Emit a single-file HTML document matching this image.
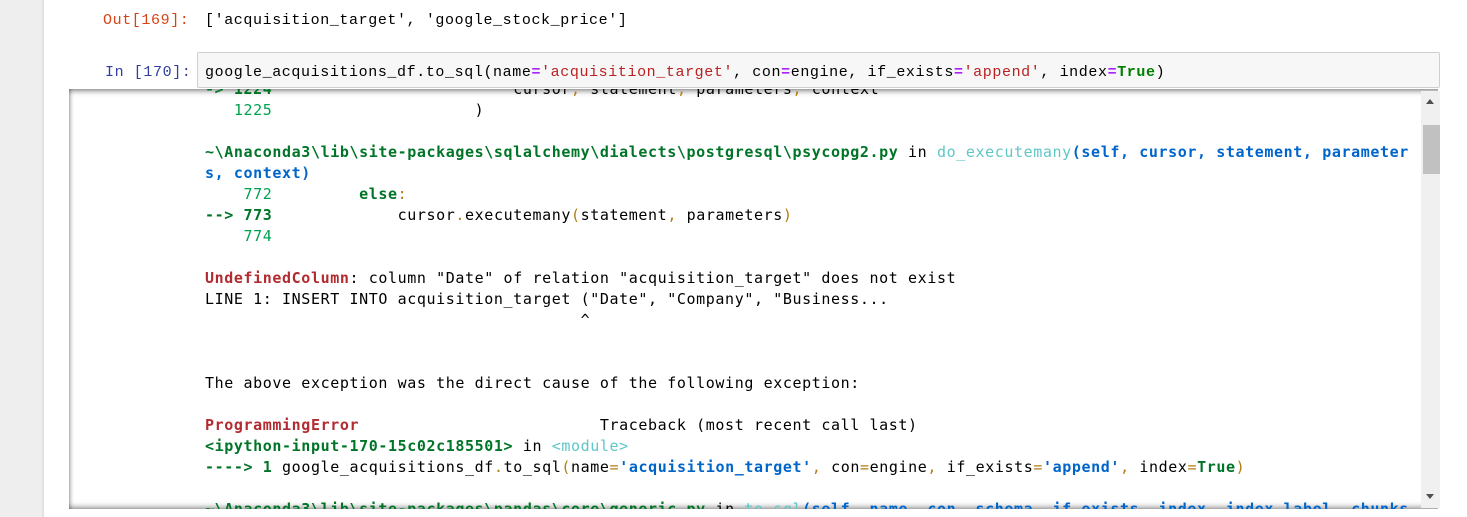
<!DOCTYPE html>
<html><head><style>
body{margin:0;width:1467px;height:517px;overflow:hidden;background:#fff;position:relative;font-family:"Liberation Mono",monospace;}
.gut{position:absolute;left:0;top:0;width:42px;height:517px;background:#eee;}
.sh{position:absolute;left:42px;top:0;width:2px;height:517px;background:#e2e2e2;}
.m{font-size:15px;letter-spacing:0.6px;white-space:pre;line-height:21px;}
.pr{position:absolute;color:#303f9f;}
.out{position:absolute;left:69px;top:89px;width:1369px;height:420px;overflow:hidden;background:#fff;box-shadow:inset 0 6px 6px -4px rgba(0,0,0,.45),inset 3px 0 4px -2px rgba(0,0,0,.4),inset 0 -6px 6px -4px rgba(0,0,0,.4);}
.out pre{position:absolute;left:136px;top:-10px;margin:0;color:#000;}
.r{color:#b22b31;font-weight:bold}
.g{color:#007427;font-weight:bold}
.ln{color:#00a250}
.b{color:#0065ca;font-weight:bold}
.c{color:#60c6c8}
.y{color:#b27d12}
.sb{position:absolute;left:1421px;top:91px;width:19px;height:417px;background:#f0f0f0;}
.th{position:absolute;left:2px;top:34px;width:17px;height:49px;background:#c1c1c1;}
</style></head><body>
<div class="gut"></div><div class="sh"></div>
<div class="pr m" style="left:103px;top:10px;color:#d84315">Out[169]:</div>
<div class="m" style="position:absolute;left:205px;top:10px">['acquisition_target', 'google_stock_price']</div>
<div class="pr m" style="left:105px;top:62px">In [170]:</div>
<div style="position:absolute;left:197px;top:52px;width:1243px;height:36px;background:#f7f7f7;border:1px solid #cfcfcf;border-radius:2px;box-sizing:border-box"></div>
<div class="m" style="position:absolute;left:205px;top:62px">google_acquisitions_df.to_sql(name<span style="color:#aa22ff;font-weight:bold">=</span><span style="color:#ba2121">'acquisition_target'</span>, con<span style="color:#aa22ff;font-weight:bold">=</span>engine, if_exists<span style="color:#aa22ff;font-weight:bold">=</span><span style="color:#ba2121">'append'</span>, index<span style="color:#aa22ff;font-weight:bold">=</span><span style="color:#008000;font-weight:bold">True</span>)</div>
<div class="out"><pre class="m"><span class="g">-&gt; 1224</span>                         cursor<span class="y">,</span> statement<span class="y">,</span> parameters<span class="y">,</span> context
<span class="ln">   1225</span>                     )

<span class="g">~\Anaconda3\lib\site-packages\sqlalchemy\dialects\postgresql\psycopg2.py</span> in <span class="c">do_executemany</span><span class="b">(self, cursor, statement, parameter</span>
<span class="b">s, context)</span>
<span class="ln">    772</span>         <span class="g">else</span><span class="y">:</span>
<span class="g">--&gt; 773</span>             cursor<span class="y">.</span>executemany<span class="y">(</span>statement<span class="y">,</span> parameters<span class="y">)</span>
<span class="ln">    774</span>

<span class="r">UndefinedColumn</span>: column "Date" of relation "acquisition_target" does not exist
LINE 1: INSERT INTO acquisition_target ("Date", "Company", "Business...
                                       ^


The above exception was the direct cause of the following exception:

<span class="r">ProgrammingError</span>                         Traceback (most recent call last)
<span class="g">&lt;ipython-input-170-15c02c185501&gt;</span> in <span class="c">&lt;module&gt;</span>
<span class="g">----&gt; 1</span> google_acquisitions_df<span class="y">.</span>to_sql<span class="y">(</span>name<span class="y">=</span><span class="b">'acquisition_target'</span><span class="y">,</span> con<span class="y">=</span>engine<span class="y">,</span> if_exists<span class="y">=</span><span class="b">'append'</span><span class="y">,</span> index<span class="y">=</span><span class="g">True</span><span class="y">)</span>

<span class="g">~\Anaconda3\lib\site-packages\pandas\core\generic.py</span> in <span class="c">to_sql</span><span class="b">(self, name, con, schema, if_exists, index, index_label, chunks</span></pre></div>
<div class="sb"><div class="th"></div>
<div style="position:absolute;left:5px;top:8px;width:0;height:0;border-left:4px solid transparent;border-right:4px solid transparent;border-bottom:5px solid #505050"></div>
<div style="position:absolute;left:5px;top:403px;width:0;height:0;border-left:4px solid transparent;border-right:4px solid transparent;border-top:5px solid #505050"></div>
</div>
</body></html>
